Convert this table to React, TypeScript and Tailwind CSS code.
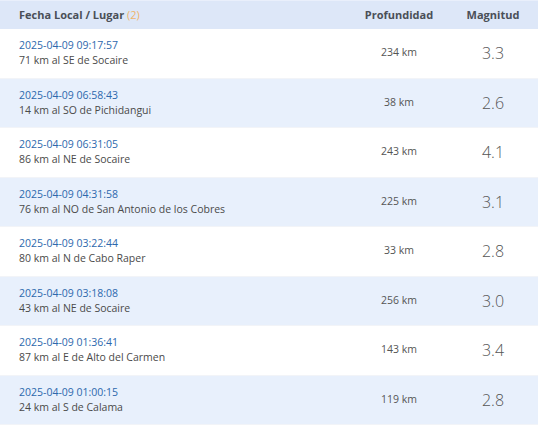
const ROWS = [
  { date: '2025-04-09 09:17:57', place: '71 km al SE de Socaire', depth: '234 km', mag: '3.3' },
  { date: '2025-04-09 06:58:43', place: '14 km al SO de Pichidangui', depth: '38 km', mag: '2.6' },
  { date: '2025-04-09 06:31:05', place: '86 km al NE de Socaire', depth: '243 km', mag: '4.1' },
  { date: '2025-04-09 04:31:58', place: '76 km al NO de San Antonio de los Cobres', depth: '225 km', mag: '3.1' },
  { date: '2025-04-09 03:22:44', place: '80 km al N de Cabo Raper', depth: '33 km', mag: '2.8' },
  { date: '2025-04-09 03:18:08', place: '43 km al NE de Socaire', depth: '256 km', mag: '3.0' },
  { date: '2025-04-09 01:36:41', place: '87 km al E de Alto del Carmen', depth: '143 km', mag: '3.4' },
  { date: '2025-04-09 01:00:15', place: '24 km al S de Calama', depth: '119 km', mag: '2.8' },
]

export default function App() {
  return (
    <div className="w-[538px] h-[425px] overflow-hidden bg-white font-['Open_Sans',sans-serif]">
      {/* Header */}
      <div className="grid grid-cols-[1fr_96px_90px] items-center h-[29px] bg-[#dde7f8] border-t border-[#e9effb] text-[11px] font-bold text-[#4a4f57]">
        <div className="pl-[19px]">
          Fecha Local / Lugar <span className="font-normal text-[#f0b46a]">(2)</span>
        </div>
        <div className="text-center pr-[2px]">Profundidad</div>
        <div className="text-center">Magnitud</div>
      </div>

      {/* Rows */}
      {ROWS.map((r, i) => (
        <div
          key={i}
          className={`grid grid-cols-[1fr_96px_90px] items-center h-[49.5px] border-b border-[#f2f4f8] ${i % 2 === 1 ? 'bg-[#e8f0fc]' : 'bg-white'}`}
        >
          <div className="pl-[19px] text-[10.5px] leading-[15px]">
            <div className="text-[#2d68ad]">{r.date}</div>
            <div className="text-[#4a4a4a]">{r.place}</div>
          </div>
          <div className="text-center text-[10.5px] text-[#555] pr-[2px]">{r.depth}</div>
          <div className="text-center text-[16px] font-light text-[#555]">{r.mag}</div>
        </div>
      ))}
    </div>
  )
}
